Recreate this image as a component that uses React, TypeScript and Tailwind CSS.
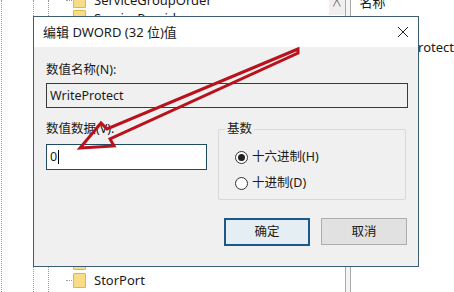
import React from 'react'

// Only the rows that peek out from under the dialog carry a label.
const TREE_ROWS = [
  'ServiceGroupOrder',
  'ServiceProvider',
  '',
  '',
  '',
  '',
  '',
  '',
  '',
  '',
  '',
  '',
  '',
  '',
  '',
  '',
  'StorPort',
]

function Folder() {
  return (
    <span className="h-[15px] w-[13px] shrink-0 rounded-[1px] border border-[#d9b94c] bg-[#f8dc86]" />
  )
}

function Radio({ checked, label }: { checked?: boolean; label: string }) {
  return (
    <div className="flex h-[16px] items-center gap-[4px]">
      <span className="flex h-[13px] w-[13px] items-center justify-center rounded-full border border-[#333] bg-white">
        {checked && <span className="h-[7px] w-[7px] rounded-full bg-[#222]" />}
      </span>
      <span>{label}</span>
    </div>
  )
}

export default function App() {
  return (
    <div className="relative h-[292px] w-[454px] overflow-hidden bg-white font-['Noto_Sans','Noto_Sans_CJK_SC',sans-serif] text-[12.5px] leading-[16px] text-[#1a1a1a]">
      {/* background regedit window */}
      <div className="flex h-full">
        {/* tree pane */}
        <div className="flex h-full w-[337px]">
          <div className="ml-px w-[32px] border-l border-dotted border-[#9a9a9a]" />
          <div className="w-[15px] border-l border-dotted border-[#9a9a9a]" />
          <div className="w-[16px] border-l border-dotted border-[#9a9a9a]" />
          <div className="-mt-[8.75px] flex flex-col">
            {TREE_ROWS.map((name, i) => (
              <div key={i} className="flex h-[17.5px] items-center">
                <span className="ml-[2px] w-[6px] border-t border-dotted border-[#9a9a9a]" />
                <span className="ml-[1px] flex items-center">
                  <Folder />
                </span>
                <span className="ml-[8px] whitespace-nowrap text-[13px]">{name}</span>
              </div>
            ))}
          </div>
        </div>
        {/* scrollbar */}
        <div className="flex h-full w-[16px] flex-col">
          <div className="flex h-[15px] items-start justify-center bg-[#f0eeee] text-[10px] leading-[6px] text-[#555]">
            ∧
          </div>
        </div>
        {/* splitter */}
        <div className="h-full w-[6px] border-x border-[#a8a8a8] bg-[#f4f4f4]" />
        {/* list pane */}
        <div className="flex flex-1 flex-col">
          <div className="-mt-[6px] ml-[9px] h-[17px] text-[13px]">名称</div>
          <div className="mt-[28px] flex items-center">
            <span className="ml-[27px] text-[13px] whitespace-nowrap">WriteProtect</span>
          </div>
        </div>
      </div>

      {/* dialog */}
      <div className="absolute left-[33px] top-[16px] flex h-[251px] w-[386px] flex-col border border-[#3d5d72] bg-[#f0f0f0]">
        <div className="flex h-[30px] shrink-0 items-center justify-between bg-white pl-[9px] pr-[9px]">
          <span className="text-[13px]">编辑 DWORD (32 位)值</span>
          <svg width="12" height="12" viewBox="0 0 12 12">
            <path d="M1 1 L11 11 M11 1 L1 11" stroke="#222" strokeWidth="1" />
          </svg>
        </div>
        <div className="flex flex-col px-[12px] pt-[15px]">
          <div>数值名称(N):</div>
          <div className="mt-[5px] flex h-[25px] w-[362px] items-center border border-[#3a3a3a] bg-[#f0f0f0] px-[3px]">
            WriteProtect
          </div>
          <div className="mt-[13px] flex gap-[11px]">
            <div className="flex flex-col">
              <div>数值数据(V):</div>
              <div className="mt-[7px] flex h-[26px] w-[161px] items-center border border-[#1e4a63] bg-white px-[3px]">
                0<span className="ml-[1px] h-[14px] w-px bg-black" />
              </div>
            </div>
            <div className="relative mt-[8px] h-[71px] w-[190px] rounded-[2px] border border-[#d8d8d8]">
              <span className="absolute -top-[9px] left-[6px] bg-[#f0f0f0] px-[2px]">基数</span>
              <div className="flex flex-col gap-[10px] pl-[16px] pt-[19px]">
                <Radio checked label="十六进制(H)" />
                <Radio label="十进制(D)" />
              </div>
            </div>
          </div>
          <div className="mt-[18px] flex justify-end gap-[11px]">
            <button className="flex h-[28px] w-[86px] items-center justify-center border-2 border-[#1b5a86] bg-[#e5eef3]">
              确定
            </button>
            <button className="mr-[-1px] flex h-[27px] w-[86px] items-center justify-center border border-[#adadad] bg-[#e1e1e1]">
              取消
            </button>
          </div>
        </div>
      </div>

      {/* red annotation arrow */}
      <svg
        className="pointer-events-none absolute left-0 top-0"
        width="454"
        height="292"
        viewBox="0 0 454 292"
      >
        <polygon
          points="298,49 107,129 101,123 80,148 114,146 110,139 298,53"
          fill="none"
          stroke="#b8121c"
          strokeWidth="3"
          strokeLinejoin="miter"
        />
      </svg>
    </div>
  )
}
